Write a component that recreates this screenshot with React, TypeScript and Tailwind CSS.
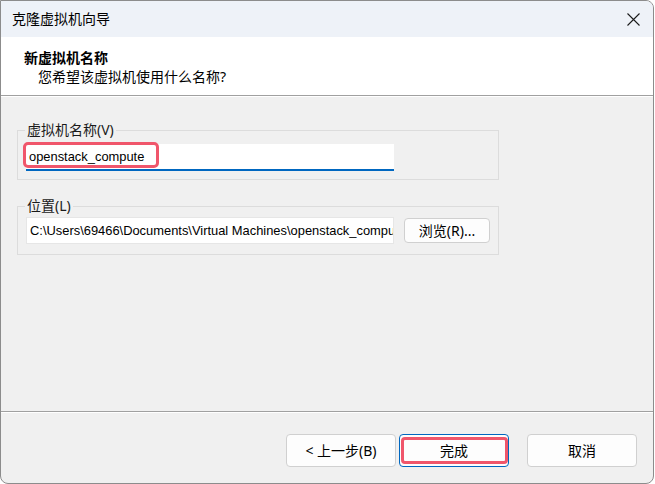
import React from "react";

const FONT = { fontFamily: '"Noto Sans", "Noto Sans CJK SC", sans-serif' };
const INPUT_FONT = { fontFamily: '"Liberation Sans", Arial, sans-serif' };

function CloseIcon() {
  return (
    <svg width="13" height="13" viewBox="0 0 13 13" fill="none">
      <path d="M0.5 0.5L12.5 12.5M12.5 0.5L0.5 12.5" stroke="#1b1b1b" strokeWidth="1.1" />
    </svg>
  );
}

function Button({
  children,
  primary = false,
  marked = false,
}: {
  children: React.ReactNode;
  primary?: boolean;
  marked?: boolean;
}) {
  return (
    <div
      className={
        "relative w-[110px] h-[33px] flex items-center justify-center rounded-[4px] bg-[#fdfdfd] text-[14px] text-black " +
        (primary ? "border border-[#0067c0]" : "border border-[#d0d0d0]")
      }
    >
      {children}
      {marked && (
        <div className="absolute left-[1px] right-[0px] top-[2px] bottom-[2px] rounded-[4px] border-[3px] border-[#f0566b]" />
      )}
    </div>
  );
}

export default function App() {
  return (
    <div className="w-[655px] h-[484px] bg-white" style={FONT}>
      <div className="w-[654px] h-[484px] flex flex-col border border-[#8c8c8c] rounded-tr-[8px] rounded-b-[8px] overflow-hidden bg-[#f0f0f0]">
        {/* title bar */}
        <div className="h-[36px] shrink-0 bg-[#eef2f8] flex items-center justify-between pl-[11px] pr-[13px]">
          <span className="text-[14px] leading-[20px] text-black">克隆虚拟机向导</span>
          <CloseIcon />
        </div>

        {/* page header */}
        <div className="h-[59px] shrink-0 bg-white border-b border-[#a0a0a0] pl-[23px] pt-[11px]">
          <div className="text-[14px] leading-[19px] font-bold text-black">新虚拟机名称</div>
          <div className="pl-[14px] text-[14px] leading-[19px] text-black">您希望该虚拟机使用什么名称?</div>
        </div>

        {/* body */}
        <div className="flex-1 border-t border-white px-[16px] pt-[25px] flex flex-col">
          <fieldset className="w-[482px] border border-[#dcdcdc] pl-[7px] pb-[8px]">
            <legend className="px-[2px] text-[14px] leading-[16px] text-[#1a1a1a]">虚拟机名称(V)</legend>
            <div className="relative mt-[6px] ml-[1px] w-[368px] h-[27px] bg-white border-b-2 border-[#0067c0] flex items-center pl-[3px]">
              <span className="text-[12.9px] text-black" style={INPUT_FONT}>
                openstack_compute
              </span>
              <div className="absolute left-[-3px] top-[-2px] w-[136px] h-[26px] rounded-[5px] border-[3px] border-[#f0566b]" />
            </div>
          </fieldset>

          <fieldset className="mt-[18px] w-[482px] border border-[#dcdcdc] pl-[7px] pb-[10px]">
            <legend className="px-[2px] text-[14px] leading-[16px] text-[#1a1a1a]">位置(L)</legend>
            <div className="mt-[3px] ml-[1px] flex items-start gap-[10px]">
              <div className="w-[368px] h-[27px] bg-white border border-[#e6e6e6] flex items-center pl-[3px] overflow-hidden">
                <span className="text-[12.9px] text-black whitespace-nowrap" style={INPUT_FONT}>
                  C:\Users\69466\Documents\Virtual Machines\openstack_compute
                </span>
              </div>
              <div className="mt-[1px] w-[86px] h-[25px] rounded-[4px] border border-[#d0d0d0] bg-[#fdfdfd] flex items-center justify-center text-[14px] text-black">
                浏览(R)...
              </div>
            </div>
          </fieldset>
        </div>

        {/* footer */}
        <div className="shrink-0 border-t border-[#a0a0a0]">
          <div className="border-t border-white pt-[21px] pb-[16px] pr-[16px] flex justify-end">
            <Button>&lt; 上一步(B)</Button>
            <div className="ml-[3px]">
              <Button primary marked>
                完成
              </Button>
            </div>
            <div className="ml-[18px]">
              <Button>取消</Button>
            </div>
          </div>
        </div>
      </div>
    </div>
  );
}
